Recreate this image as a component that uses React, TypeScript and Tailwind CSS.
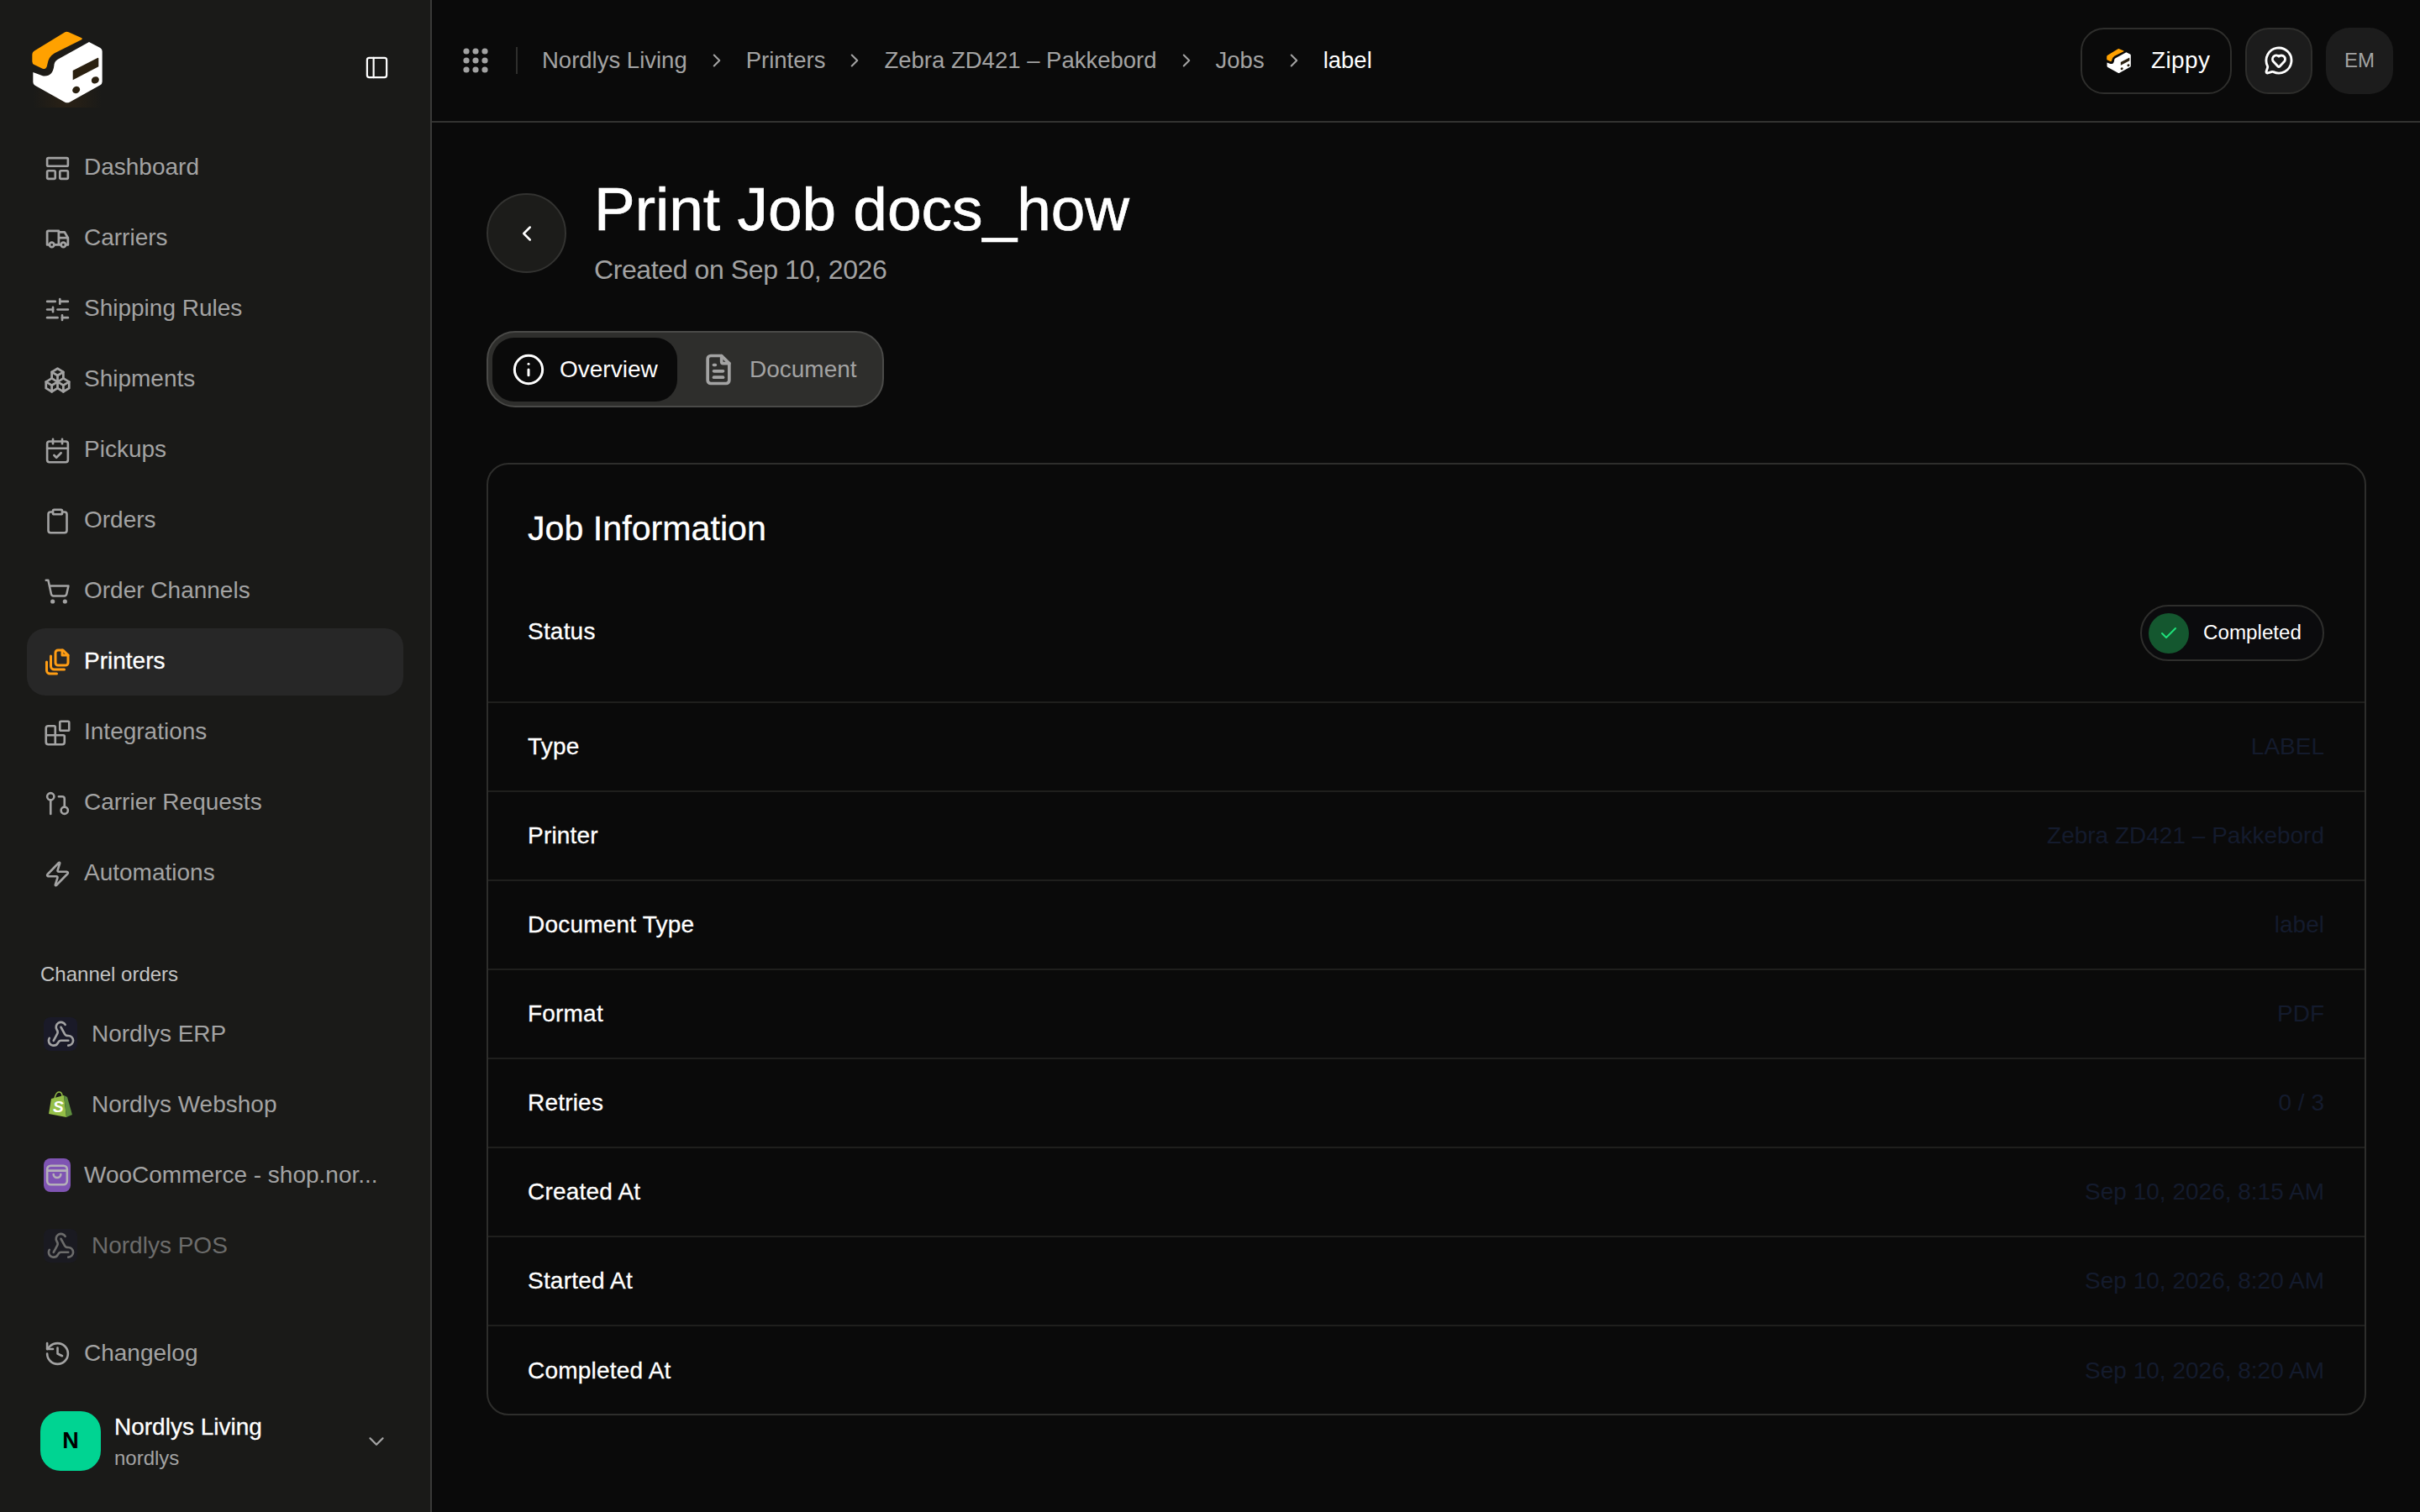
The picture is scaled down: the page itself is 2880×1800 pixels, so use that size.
import type { ReactNode } from 'react';
import {
  Blocks,
  Check,
  ChevronDown,
  ChevronLeft,
  ChevronRight,
  Clipboard,
  CalendarCheck,
  GitPullRequest,
  History,
  Info,
  LayoutPanelTop,
  MessageCircleHeart,
  PanelLeft,
  ShoppingCart,
  SlidersHorizontal,
  Webhook,
  Zap,
} from 'lucide-react';
import { TbFileText, TbPackages, TbTruck } from 'react-icons/tb';

function BrandMark({ className }: { className: string }) {
  return (
    <svg viewBox="36 36 288 288" className={className}>
      <path
        d="M258 90 L298 111 Q305 115 305 123 L305 232 Q305 240 298 244 L188 305 Q180 309 172 305 L65 245 Q58 241 58 233 L58 198 L92 211 Q128 216 133 175 Q133 160 146 152 Z"
        fill="#fff"
      />
      <path
        d="M172 55 Q178 52 185 55 L232 76 Q236 79 231 82 L135 130 Q113 143 109 170 Q106 190 92 185 L62 171 Q55 168 55 160 L55 136 Q55 126 64 121 Z"
        fill="#ffa100"
      />
      <path d="M200 192 L288 147 Q292 145 292 150 L292 178 L200 226 Z" fill="#2a2010" />
      <ellipse cx="212" cy="261" rx="14" ry="12" transform="rotate(-30 212 261)" fill="#2a2010" />
      <ellipse cx="280" cy="226" rx="14" ry="12" transform="rotate(-30 280 226)" fill="#2a2010" />
    </svg>
  );
}

function PrinterPages() {
  return (
    <svg viewBox="0 0 36 36" width={36} height={36} fill="none" stroke="#ff9d14" strokeWidth={3} strokeLinecap="round" strokeLinejoin="round">
      <path d="M19 4h6l6 6v9a3 3 0 0 1-3 3h-9a3 3 0 0 1-3-3V7a3 3 0 0 1 3-3z" />
      <path d="M24 4v6h7" />
      <path d="M10.5 11v12a4 4 0 0 0 4 4h12" />
      <path d="M5.5 18v10a4 4 0 0 0 4 4h8" />
    </svg>
  );
}

function GridDots() {
  return (
    <svg viewBox="0 0 30 30" width={30} height={30} fill="#a3a3a3">
      {[4, 15, 26].map((cy) =>
        [4, 15, 26].map((cx) => <circle key={`${cx}-${cy}`} cx={cx} cy={cy} r={3.6} />),
      )}
    </svg>
  );
}

function ShopifyBag() {
  return (
    <svg viewBox="0 0 28 32" width={28} height={32}>
      <path d="M3 9 L18 5 L21 31 L0 27 Z" fill="#95bf47" />
      <path d="M18 5 L22 7 L28 28 L21 31 Z" fill="#5e8e3e" />
      <path d="M7 8 Q9 1 12 1 Q16 1 16 6" fill="none" stroke="#95bf47" strokeWidth={1.5} />
      <text x="5" y="25" fontSize="19" fontWeight="700" fontStyle="italic" fill="#fff" fontFamily="Liberation Sans, sans-serif">
        S
      </text>
    </svg>
  );
}

function WooIcon() {
  return (
    <div className="flex h-[40px] w-[32px] shrink-0 items-center justify-center rounded-[8px] bg-[#7f54b3]">
      <svg viewBox="0 0 26 26" width={28} height={32} fill="none" stroke="#b4b0b8" strokeWidth={2.4} strokeLinecap="round" strokeLinejoin="round">
        <rect x="2" y="2.5" width="22" height="21" rx="4" />
        <path d="M2.5 8h21" />
        <path d="M9 12c0 5 8 5 8 0" />
      </svg>
    </div>
  );
}

function HookIcon() {
  return (
    <div className="flex h-[40px] w-[40px] shrink-0 items-center justify-center rounded-[8px] bg-[#1a1a28]">
      <Webhook size={35} strokeWidth={1.8} />
    </div>
  );
}

const NAV_ITEMS: { label: string; icon: ReactNode; active?: boolean }[] = [
  { label: 'Dashboard', icon: <LayoutPanelTop size={33} strokeWidth={1.9} /> },
  { label: 'Carriers', icon: <TbTruck size={33} /> },
  { label: 'Shipping Rules', icon: <SlidersHorizontal size={33} strokeWidth={1.9} /> },
  { label: 'Shipments', icon: <TbPackages size={33} /> },
  { label: 'Pickups', icon: <CalendarCheck size={33} strokeWidth={1.9} /> },
  { label: 'Orders', icon: <Clipboard size={33} strokeWidth={1.9} /> },
  { label: 'Order Channels', icon: <ShoppingCart size={32} strokeWidth={1.9} /> },
  { label: 'Printers', icon: <PrinterPages />, active: true },
  { label: 'Integrations', icon: <Blocks size={33} strokeWidth={1.9} /> },
  { label: 'Carrier Requests', icon: <GitPullRequest size={33} strokeWidth={1.9} /> },
  { label: 'Automations', icon: <Zap size={33} strokeWidth={1.9} /> },
];

const CRUMBS = ['Nordlys Living', 'Printers', 'Zebra ZD421 – Pakkebord', 'Jobs'];

const JOB_ROWS = [
  { label: 'Type', value: 'LABEL' },
  { label: 'Printer', value: 'Zebra ZD421 – Pakkebord' },
  { label: 'Document Type', value: 'label' },
  { label: 'Format', value: 'PDF' },
  { label: 'Retries', value: '0 / 3' },
  { label: 'Created At', value: 'Sep 10, 2026, 8:15 AM' },
  { label: 'Started At', value: 'Sep 10, 2026, 8:20 AM' },
  { label: 'Completed At', value: 'Sep 10, 2026, 8:20 AM' },
];

function Sidebar() {
  return (
    <aside className="flex h-full w-[514px] shrink-0 flex-col border-r-2 border-[#3a3a38] bg-[#1a1a18] pb-[49px] pl-[32px] pr-[32px]">
      <div className="flex h-[160px] shrink-0 items-start justify-between pt-[32px]">
        <BrandMark className="h-[96px] w-[96px] bg-[radial-gradient(ellipse_at_50%_90%,#2a2115_0%,transparent_60%)]" />
        <div className="mr-[12px] mt-[28px] flex h-[40px] w-[40px] items-center justify-center text-white">
          <PanelLeft size={31} strokeWidth={1.7} />
        </div>
      </div>

      <nav className="flex flex-col gap-[4px]">
        {NAV_ITEMS.map((item) => (
          <div
            key={item.label}
            className={`flex h-[80px] items-center gap-[14px] rounded-[22px] pl-[18px] text-[28px] ${
              item.active ? 'bg-[#272727] text-white [-webkit-text-stroke:0.3px_#fff]' : 'text-[#a3a3a3]'
            }`}
          >
            <span className="flex h-[36px] w-[36px] items-center justify-center">{item.icon}</span>
            <span className="pb-[2px]">{item.label}</span>
          </div>
        ))}
      </nav>

      <div className="mt-[62px] mb-[13px] flex h-[36px] items-center pl-[16px] text-[24px] text-[#c4c4c4]">
        Channel orders
      </div>

      <div className="flex flex-col gap-[4px] text-[28px] text-[#a3a3a3]">
        <div className="flex h-[80px] items-center gap-[17px] pl-[20px]">
          <HookIcon />
          Nordlys ERP
        </div>
        <div className="flex h-[80px] items-center gap-[23px] pl-[26px]">
          <ShopifyBag />
          Nordlys Webshop
        </div>
        <div className="flex h-[80px] items-center gap-[16px] pl-[20px]">
          <WooIcon />
          <span className="whitespace-nowrap">WooCommerce - shop.nor...</span>
        </div>
        <div className="flex h-[80px] items-center gap-[17px] pl-[20px] opacity-60">
          <HookIcon />
          Nordlys POS
        </div>
      </div>

      <div className="mt-auto flex flex-col gap-[29px]">
        <div className="flex h-[80px] items-center gap-[14px] pl-[18px] text-[28px] text-[#a3a3a3]">
          <span className="flex h-[36px] w-[36px] items-center justify-center">
            <History size={33} strokeWidth={1.9} />
          </span>
          Changelog
        </div>
        <div className="flex h-[71px] items-center pl-[16px] pr-[17px]">
          <div className="flex h-[71px] w-[72px] items-center justify-center rounded-[24px] bg-[#00d492] text-[27px] font-bold text-black">
            N
          </div>
          <div className="ml-[16px] flex-1 pt-[3px]">
            <div className="text-[28px] leading-[37px] text-white [-webkit-text-stroke:0.3px_#fff]">Nordlys Living</div>
            <div className="text-[24px] leading-[37px] text-[#a3a3a3]">nordlys</div>
          </div>
          <ChevronDown size={30} strokeWidth={1.9} className="text-[#a3a3a3]" />
        </div>
      </div>
    </aside>
  );
}

function Topbar() {
  return (
    <header className="flex h-[146px] shrink-0 items-center border-b-2 border-[#333331] pl-[37px] pr-[32px]">
      <GridDots />
      <div className="ml-[33px] mr-[29px] h-[32px] w-[2px] bg-[#2e2e2c]" />
      <div className="flex items-center pb-[1px] text-[27.5px] text-[#a3a3a3]">
        {CRUMBS.map((crumb) => (
          <div key={crumb} className="flex items-center">
            <span>{crumb}</span>
            <ChevronRight size={26} strokeWidth={1.9} className="mx-[22px]" />
          </div>
        ))}
        <span className="text-white">label</span>
      </div>
      <div className="ml-auto flex items-center gap-[16px]">
        <div className="flex h-[79px] w-[180px] items-center gap-[22px] rounded-[28px] border-2 border-[#2e2e2c] pl-[27px] text-[28px] tracking-[0.4px] text-white">
          <BrandMark className="h-[33px] w-[33px]" />
          Zippy
        </div>
        <div className="flex h-[79px] w-[80px] items-center justify-center rounded-[28px] border-2 border-[#2e2e2c] bg-[#1c1c1c] text-white">
          <MessageCircleHeart size={36} strokeWidth={1.9} />
        </div>
        <div className="flex h-[79px] w-[80px] items-center justify-center rounded-[28px] bg-[#1c1c1c] text-[24px] text-[#a3a3a3]">
          EM
        </div>
      </div>
    </header>
  );
}

function JobCard() {
  return (
    <section className="mt-[66px] h-[1134px] rounded-[26px] border-2 border-[#2e2e2c]">
      <h2 className="h-[112px] px-[47px] pt-[51px] text-[41.2px] leading-[50px] text-white [-webkit-text-stroke:0.3px_#fff]">
        Job Information
      </h2>
      <div className="flex h-[172px] items-center justify-between border-b-2 border-[#1f1f1d] pl-[47px] pr-[48px] pt-[4px] text-[28px] tracking-[0.2px] text-white [-webkit-text-stroke:0.3px_#fff]">
        <span>Status</span>
        <div className="mt-[3px] flex h-[67px] w-[219px] items-center rounded-full border-2 border-[#2e2e2c] bg-[#0b0b0d] pl-[8px]">
          <span className="flex h-[48px] w-[48px] items-center justify-center rounded-full bg-[#14572f] text-[#1fe07a]">
            <Check size={24} strokeWidth={2} />
          </span>
          <span className="ml-[17px] text-[24.2px] tracking-normal [-webkit-text-stroke:0px]">Completed</span>
        </div>
      </div>
      {JOB_ROWS.map((row, i) => (
        <div
          key={row.label}
          className={`flex h-[106px] items-center justify-between pl-[47px] pr-[48px] text-[28px] ${
            i < JOB_ROWS.length - 1 ? 'border-b-2 border-[#1f1f1d]' : ''
          }`}
        >
          <span className="tracking-[0.2px] text-white [-webkit-text-stroke:0.3px_#fff]">{row.label}</span>
          <span className="text-[#141b2d]">{row.value}</span>
        </div>
      ))}
    </section>
  );
}

export default function App() {
  return (
    <div className="flex h-[1800px] w-[2880px] overflow-hidden bg-[#0a0a0a] font-['Liberation_Sans',sans-serif]">
      <Sidebar />
      <main className="flex min-w-0 flex-1 flex-col">
        <Topbar />
        <div className="pl-[65px] pr-[64px] pt-[59px]">
          <div className="flex gap-[33px]">
            <button className="mt-[25px] flex h-[95px] w-[95px] items-center justify-center rounded-full border-2 border-[#333331] bg-[#1c1c1a] text-white">
              <ChevronLeft size={30} strokeWidth={2} />
            </button>
            <div>
              <h1 className="text-[73px] leading-[88px] text-white [-webkit-text-stroke:0.7px_#fff]">Print Job docs_how</h1>
              <p className="mt-[6px] text-[32px] leading-[44px] tracking-[-0.4px] text-[#a3a3a3]">Created on Sep 10, 2026</p>
            </div>
          </div>

          <div className="mt-[51px] flex h-[91px] w-[473px] items-center rounded-[34px] border-2 border-[#4a4a48] bg-[#2e2e2c] pl-[5px] text-[28px]">
            <div className="flex h-[76px] w-[220px] items-center gap-[17px] rounded-[26px] bg-[#0a0a0a] pl-[23px] text-white">
              <Info size={40} strokeWidth={1.8} />
              Overview
            </div>
            <div className="ml-[27px] flex items-center gap-[15px] text-[#a3a3a3]">
              <TbFileText size={44} />
              Document
            </div>
          </div>

          <JobCard />
        </div>
      </main>
    </div>
  );
}
